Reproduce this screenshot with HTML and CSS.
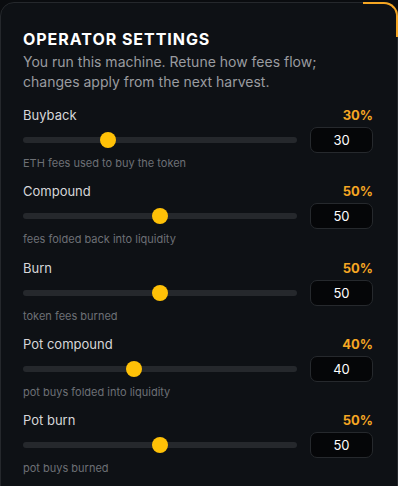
FILE: index.html
```html
<!DOCTYPE html>
<html lang="en">
<head>
  <meta charset="UTF-8" />
  <meta name="viewport" content="width=device-width, initial-scale=1.0"/>
  <title>Operator Settings</title>
  <link rel="stylesheet" href="styles.css">
</head>
<body>
  <div class="card">
    <h2 class="title">OPERATOR SETTINGS</h2>
    <p class="lead">You run this machine. Retune how fees flow; changes apply from the next harvest.</p>

    <div class="setting">
      <div class="setting-head"><span>Buyback</span><span class="pct">30%</span></div>
      <div class="setting-ctrl">
        <input type="range" min="0" max="100" value="30">
        <input type="text" class="num" value="30">
      </div>
      <div class="hint">ETH fees used to buy the token</div>
    </div>

    <div class="setting">
      <div class="setting-head"><span>Compound</span><span class="pct">50%</span></div>
      <div class="setting-ctrl">
        <input type="range" min="0" max="100" value="50">
        <input type="text" class="num" value="50">
      </div>
      <div class="hint">fees folded back into liquidity</div>
    </div>

    <div class="setting">
      <div class="setting-head"><span>Burn</span><span class="pct">50%</span></div>
      <div class="setting-ctrl">
        <input type="range" min="0" max="100" value="50">
        <input type="text" class="num" value="50">
      </div>
      <div class="hint">token fees burned</div>
    </div>

    <div class="setting">
      <div class="setting-head"><span>Pot compound</span><span class="pct">40%</span></div>
      <div class="setting-ctrl">
        <input type="range" min="0" max="100" value="40">
        <input type="text" class="num" value="40">
      </div>
      <div class="hint">pot buys folded into liquidity</div>
    </div>

    <div class="setting">
      <div class="setting-head"><span>Pot burn</span><span class="pct">50%</span></div>
      <div class="setting-ctrl">
        <input type="range" min="0" max="100" value="50">
        <input type="text" class="num" value="50">
      </div>
      <div class="hint">pot buys burned</div>
    </div>
  </div>
</body>
</html>
```

FILE: styles.css
```css
body { background: #0a0c0f; margin: 0; padding-top: 2px; font-family: Inter, 'Noto Sans', sans-serif; color: #fff; overflow: hidden; }
.card { position: relative; background: #0e1115; border: 1px solid #25282c; border-radius: 14px; padding: 26px 24px 20px 22px; min-height: 520px; }
.card::after { content: ""; position: absolute; top: -1px; right: -1px; width: 33px; height: 33px; border-top: 2px solid #f5a623;
               border-right: 2px solid #f5a623; border-top-right-radius: 14px; }
.title { margin: 0; font-size: 16px; line-height: 20px; font-weight: 700; letter-spacing: 0.06em; }
.lead { margin: 3px 0 14px; font-size: 14px; line-height: 20px; color: #9a9ca0; }
.setting { margin-bottom: 12.25px; }
.setting-head { display: flex; justify-content: space-between; font-size: 13px; line-height: 18px; color: #d6d7d9; }
.pct { color: #f5a623; font-weight: 700; }
.setting-ctrl { display: flex; align-items: center; gap: 13px; margin-top: 3px; }
.hint { margin-top: 3px; font-size: 11px; line-height: 14px; color: #6d7075; }
input[type=range] { -webkit-appearance: none; appearance: none; flex: 1; margin: 0; height: 6px; border-radius: 3px; background: #25282c; outline: none; }
input[type=range]::-webkit-slider-thumb { -webkit-appearance: none; width: 16px; height: 16px; border-radius: 50%; background: #ffc107; border: none; }
input[type=range]::-moz-range-thumb { width: 16px; height: 16px; border-radius: 50%; background: #ffc107; border: none; }
.num { width: 63px; height: 26px; box-sizing: border-box; background: #050608; border: 1px solid #26292d; border-radius: 7px; color: #fff;
       font-family: inherit; font-size: 13px; text-align: center; padding: 0; outline: none; }
```
